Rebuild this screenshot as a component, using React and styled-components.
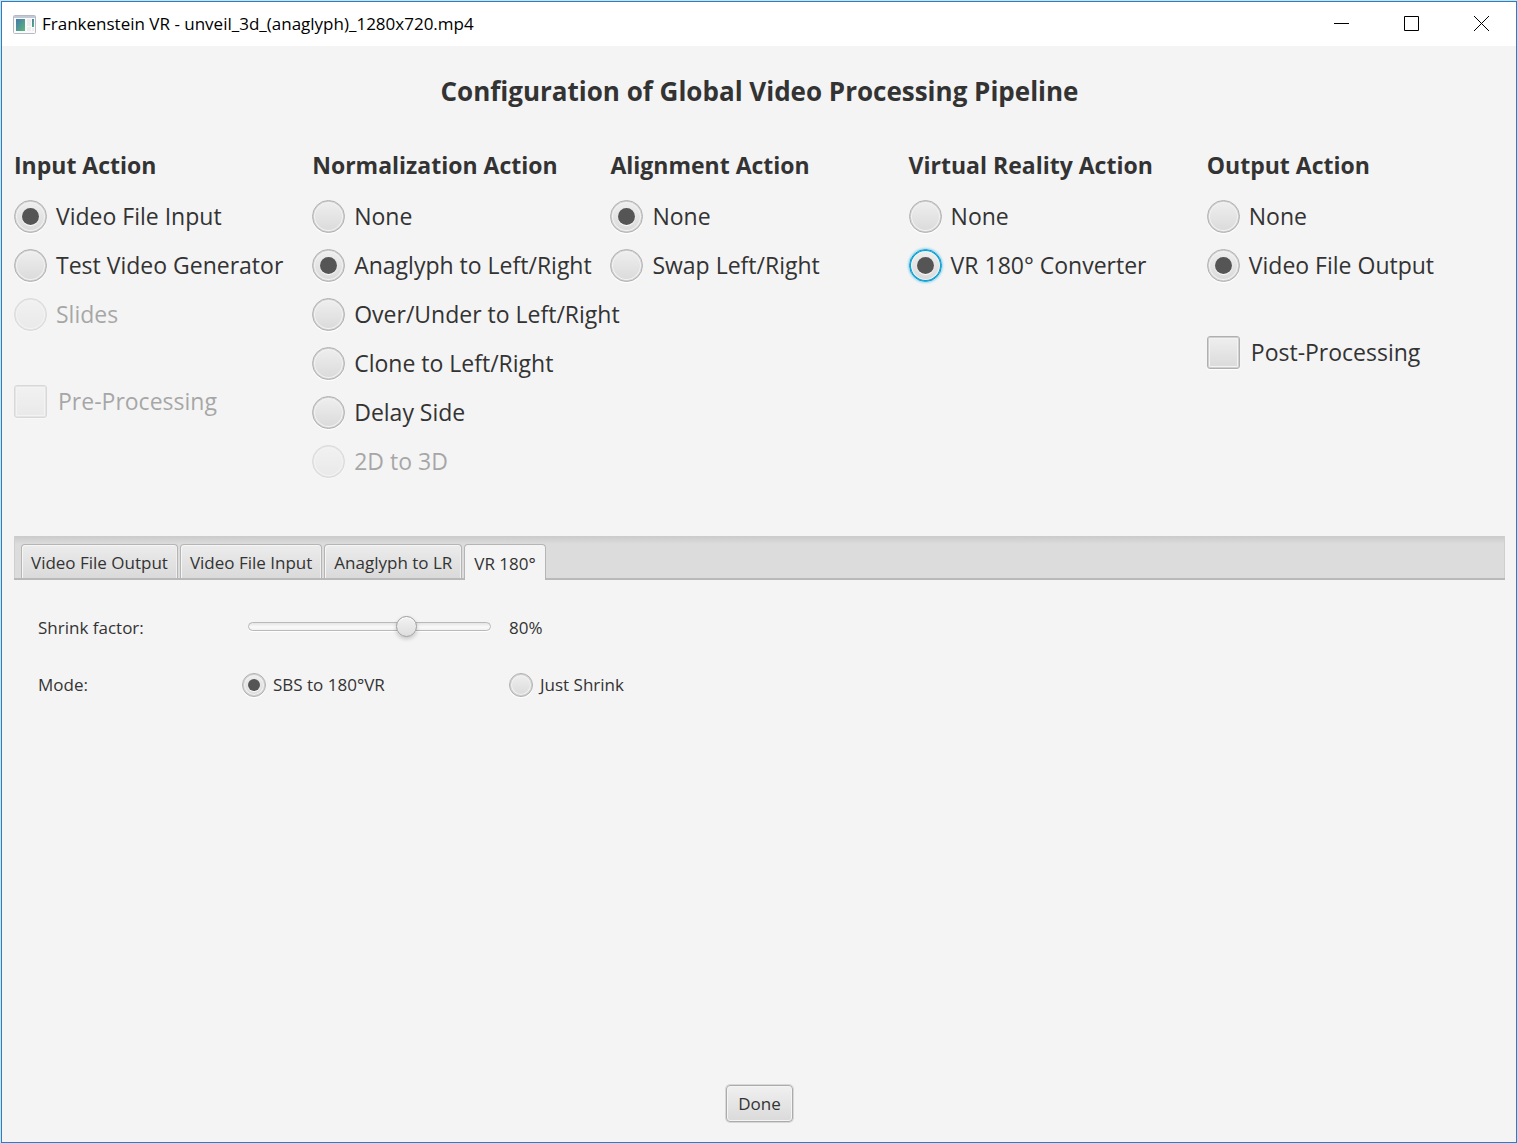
import React, { useState } from 'react';
import styled, { createGlobalStyle, css } from 'styled-components';

const GlobalStyle = createGlobalStyle`
  *, *::before, *::after { box-sizing: border-box; }
  body {
    margin: 0;
    background: #dcdcdc;
    color: #333;
    font: 17px/24px "Open Sans", "Noto Sans", sans-serif;
  }
`;

const Window = styled.div`
  display: flex;
  flex-direction: column;
  min-height: calc(100vh - 1px);
  margin: 1px 0 0 1px;
  border: 1px solid #1883d7;
  background: #f4f4f4;
`;

const TitleBar = styled.header`
  display: flex;
  align-items: center;
  gap: 6px;
  height: 44px;
  padding-left: 11px;
  background: #fff;
  color: #000;
`;

const WindowTitle = styled.span`
  flex: 1;
`;

const WindowButtons = styled.div`
  display: flex;
  align-self: start;
`;

const WindowButton = styled.button`
  display: grid;
  place-items: center;
  width: 70px;
  height: 43px;
  padding: 0;
  border: 0;
  background: none;
  color: #000;
`;

const Content = styled.main`
  display: flex;
  flex: 1;
  flex-direction: column;
  padding: 27px 11px 20px 12px;
`;

const PageTitle = styled.h1`
  margin: 0 0 39px;
  font-size: 26px;
  line-height: 36px;
  text-align: center;
`;

const Columns = styled.div`
  display: grid;
  grid-template-columns: repeat(5, minmax(0, 1fr));
  min-height: 388px;
`;

const Column = styled.fieldset`
  display: flex;
  flex-direction: column;
  gap: 16px;
  min-width: 0;
  margin: 0;
  padding: 0;
  border: 0;
`;

const ColumnTitle = styled.legend`
  margin-bottom: 18px;
  padding: 0;
  font-size: 23px;
  font-weight: 700;
  line-height: 34px;
`;

const Option = styled.label`
  display: flex;
  align-items: center;
  gap: ${(p) => (p.$small ? 7 : 9)}px;
  margin-top: ${(p) => (p.$apart ? 38 : 0)}px;
  font-size: ${(p) => (p.$small ? 17 : 23)}px;
  line-height: ${(p) => (p.$small ? 24 : 33)}px;
  white-space: nowrap;
  opacity: ${(p) => (p.$dim ? 0.4 : 1)};
`;

const control = css`
  flex: none;
  appearance: none;
  width: ${(p) => (p.$small ? 24 : 33)}px;
  height: ${(p) => (p.$small ? 24 : 33)}px;
  margin: 0;
  border: 1px solid #b0b0b0;
  background: linear-gradient(#efefef, #dadada);
  box-shadow: inset 0 0 0 1px #cfcfcf, inset 0 0 0 2px #f3f3f3, 0 1px 1px #fff;
  outline: none;
`;

const Radio = styled.input.attrs({ type: 'radio' })`
  ${control}
  display: grid;
  place-items: center;
  border-radius: 50%;

  &:checked::before {
    content: "";
    width: ${(p) => (p.$small ? 12 : 17)}px;
    height: ${(p) => (p.$small ? 12 : 17)}px;
    border-radius: 50%;
    background: #555;
    box-shadow: 0 1px 1px #fff;
  }

  &:focus {
    border-color: #039ed3;
    box-shadow: inset 0 0 0 1px #039ed3, inset 0 0 0 2px #f3f3f3, 0 0 2px 1px #9fd8ec;
  }
`;

const Checkbox = styled.input.attrs({ type: 'checkbox' })`
  ${control}
  margin-right: 2px;
  border-radius: 3px;
`;

const TabBar = styled.div`
  display: flex;
  align-items: flex-end;
  gap: 2px;
  height: 44px;
  padding: 0 7px;
  background: linear-gradient(#cacaca, #dcdcdc 8px);
  box-shadow: inset 0 -2px 0 #b9b9b9, inset -1px 0 0 #cfcfcf, inset 1px 0 0 #cfcfcf;
`;

const Tab = styled.button`
  height: ${(p) => (p.$active ? 36 : 35)}px;
  padding: 2px 9px 0;
  margin-bottom: ${(p) => (p.$active ? 0 : 1)}px;
  border: 1px solid #b5b5b5;
  border-bottom: ${(p) => (p.$active ? '0' : '1px solid #b9b9b9')};
  border-radius: 4px 4px 0 0;
  background: ${(p) => (p.$active ? '#f4f4f4' : 'linear-gradient(#ececec, #dadada)')};
  box-shadow: ${(p) => (p.$active ? 'none' : 'inset 1px 1px 0 #f6f6f6, inset -1px 0 0 #f0f0f0')};
  color: #333;
  font: inherit;
`;

const Panel = styled.section`
  display: grid;
  grid-template-columns: 204px 267px auto;
  align-items: center;
  justify-content: start;
  row-gap: 33px;
  padding: 36px 24px;
`;

const Slider = styled.input.attrs({ type: 'range' })`
  align-self: start;
  appearance: none;
  width: 243px;
  height: 21px;
  margin: 0 0 0 6px;
  background: none;

  &::-webkit-slider-runnable-track {
    height: 9px;
    border: 1px solid #b9b9b9;
    border-radius: 5px;
    background: linear-gradient(#e4e4e4, #fafafa 4px, #f1f1f1);
    box-shadow: 0 1px 1px #fff;
  }

  &::-webkit-slider-thumb {
    appearance: none;
    width: 21px;
    height: 21px;
    margin-top: -7px;
    border: 1px solid #9c9c9c;
    border-radius: 50%;
    background: linear-gradient(#f2f2f2, #dedede);
    box-shadow: inset 0 1px 0 #fff, 0 2px 4px rgba(0, 0, 0, 0.2);
  }
`;

const Footer = styled.footer`
  display: flex;
  justify-content: center;
  margin-top: auto;
`;

const DoneButton = styled.button`
  height: 37px;
  padding: 0 11px;
  border: 1px solid #ababab;
  border-radius: 4px;
  background: linear-gradient(#f0f0f0, #dadada);
  box-shadow: inset 0 0 0 1px #f4f4f4, 0 0 0 1px #d8d8d8;
  color: #333;
  font: inherit;
`;

const columns = [
  {
    title: 'Input Action',
    options: ['Video File Input', 'Test Video Generator', 'Slides'],
    selected: 'Video File Input',
    disabled: ['Slides'],
    extra: 'Pre-Processing',
    extraDisabled: true,
  },
  {
    title: 'Normalization Action',
    options: ['None', 'Anaglyph to Left/Right', 'Over/Under to Left/Right', 'Clone to Left/Right', 'Delay Side', '2D to 3D'],
    selected: 'Anaglyph to Left/Right',
    disabled: ['2D to 3D'],
  },
  { title: 'Alignment Action', options: ['None', 'Swap Left/Right'], selected: 'None' },
  {
    title: 'Virtual Reality Action',
    options: ['None', 'VR 180° Converter'],
    selected: 'VR 180° Converter',
    focused: 'VR 180° Converter',
  },
  {
    title: 'Output Action',
    options: ['None', 'Video File Output'],
    selected: 'Video File Output',
    extra: 'Post-Processing',
  },
];

const tabs = ['Video File Output', 'Video File Input', 'Anaglyph to LR', 'VR 180°'];

function AppIcon() {
  return (
    <svg width="23" height="19" viewBox="0 0 23 19" aria-hidden="true">
      <defs>
        <linearGradient id="pane" x1="0" y1="0" x2="1" y2="1">
          <stop offset="0" stopColor="#4478ad" />
          <stop offset="1" stopColor="#5cb87a" />
        </linearGradient>
      </defs>
      <rect x="0.5" y="0.5" width="22" height="18" rx="1" fill="#fafafb" stroke="#b4b9c4" />
      <path d="M1 2h21" stroke="#c3c9d4" strokeWidth="2" />
      <rect x="3" y="4" width="9" height="12" fill="url(#pane)" />
      <rect x="14" y="4" width="4" height="7" fill="#eeeeef" />
      <rect x="19" y="4" width="2" height="8" fill="url(#pane)" />
      <rect x="14" y="12" width="4" height="4" fill="#eeeeef" />
      <rect x="19" y="13" width="2" height="3" fill="#eeeeef" />
    </svg>
  );
}

function ActionColumn({ title, options, selected, disabled = [], focused, extra, extraDisabled = false }) {
  const [value, setValue] = useState(selected);
  return (
    <Column>
      <ColumnTitle>{title}</ColumnTitle>
      {options.map((name) => {
        const off = disabled.includes(name);
        return (
          <Option key={name} $dim={off}>
            <Radio
              name={title}
              checked={value === name}
              disabled={off}
              autoFocus={focused === name}
              onChange={() => setValue(name)}
            />
            {name}
          </Option>
        );
      })}
      {extra && (
        <Option $apart $dim={extraDisabled}>
          <Checkbox disabled={extraDisabled} />
          {extra}
        </Option>
      )}
    </Column>
  );
}

export default function App() {
  const [tab, setTab] = useState('VR 180°');
  const [shrink, setShrink] = useState(80);
  const [mode, setMode] = useState('SBS to 180°VR');

  return (
    <>
      <GlobalStyle />
      <Window>
        <TitleBar>
          <AppIcon />
          <WindowTitle>Frankenstein VR - unveil_3d_(anaglyph)_1280x720.mp4</WindowTitle>
          <WindowButtons>
            <WindowButton aria-label="Minimize">
              <svg width="15" height="15" stroke="currentColor"><path d="M0 7.5h15" /></svg>
            </WindowButton>
            <WindowButton aria-label="Maximize">
              <svg width="15" height="15" stroke="currentColor" fill="none"><path d="M.5.5h14v14H.5z" /></svg>
            </WindowButton>
            <WindowButton aria-label="Close">
              <svg width="15" height="15" stroke="currentColor"><path d="M0 0l15 15M15 0L0 15" /></svg>
            </WindowButton>
          </WindowButtons>
        </TitleBar>
        <Content>
          <PageTitle>Configuration of Global Video Processing Pipeline</PageTitle>
          <Columns>
            {columns.map((column) => (
              <ActionColumn key={column.title} {...column} />
            ))}
          </Columns>
          <TabBar role="tablist">
            {tabs.map((name) => (
              <Tab
                key={name}
                role="tab"
                aria-selected={tab === name}
                $active={tab === name}
                onClick={() => setTab(name)}
              >
                {name}
              </Tab>
            ))}
          </TabBar>
          <Panel role="tabpanel" aria-label={tab}>
            <label htmlFor="shrink">Shrink factor:</label>
            <Slider
              id="shrink"
              min="40"
              max="100"
              value={shrink}
              onChange={(e) => setShrink(Number(e.target.value))}
            />
            <output htmlFor="shrink">{shrink}%</output>
            <span>Mode:</span>
            {['SBS to 180°VR', 'Just Shrink'].map((name) => (
              <Option key={name} $small>
                <Radio $small name="mode" checked={mode === name} onChange={() => setMode(name)} />
                {name}
              </Option>
            ))}
          </Panel>
          <Footer>
            <DoneButton>Done</DoneButton>
          </Footer>
        </Content>
      </Window>
    </>
  );
}
